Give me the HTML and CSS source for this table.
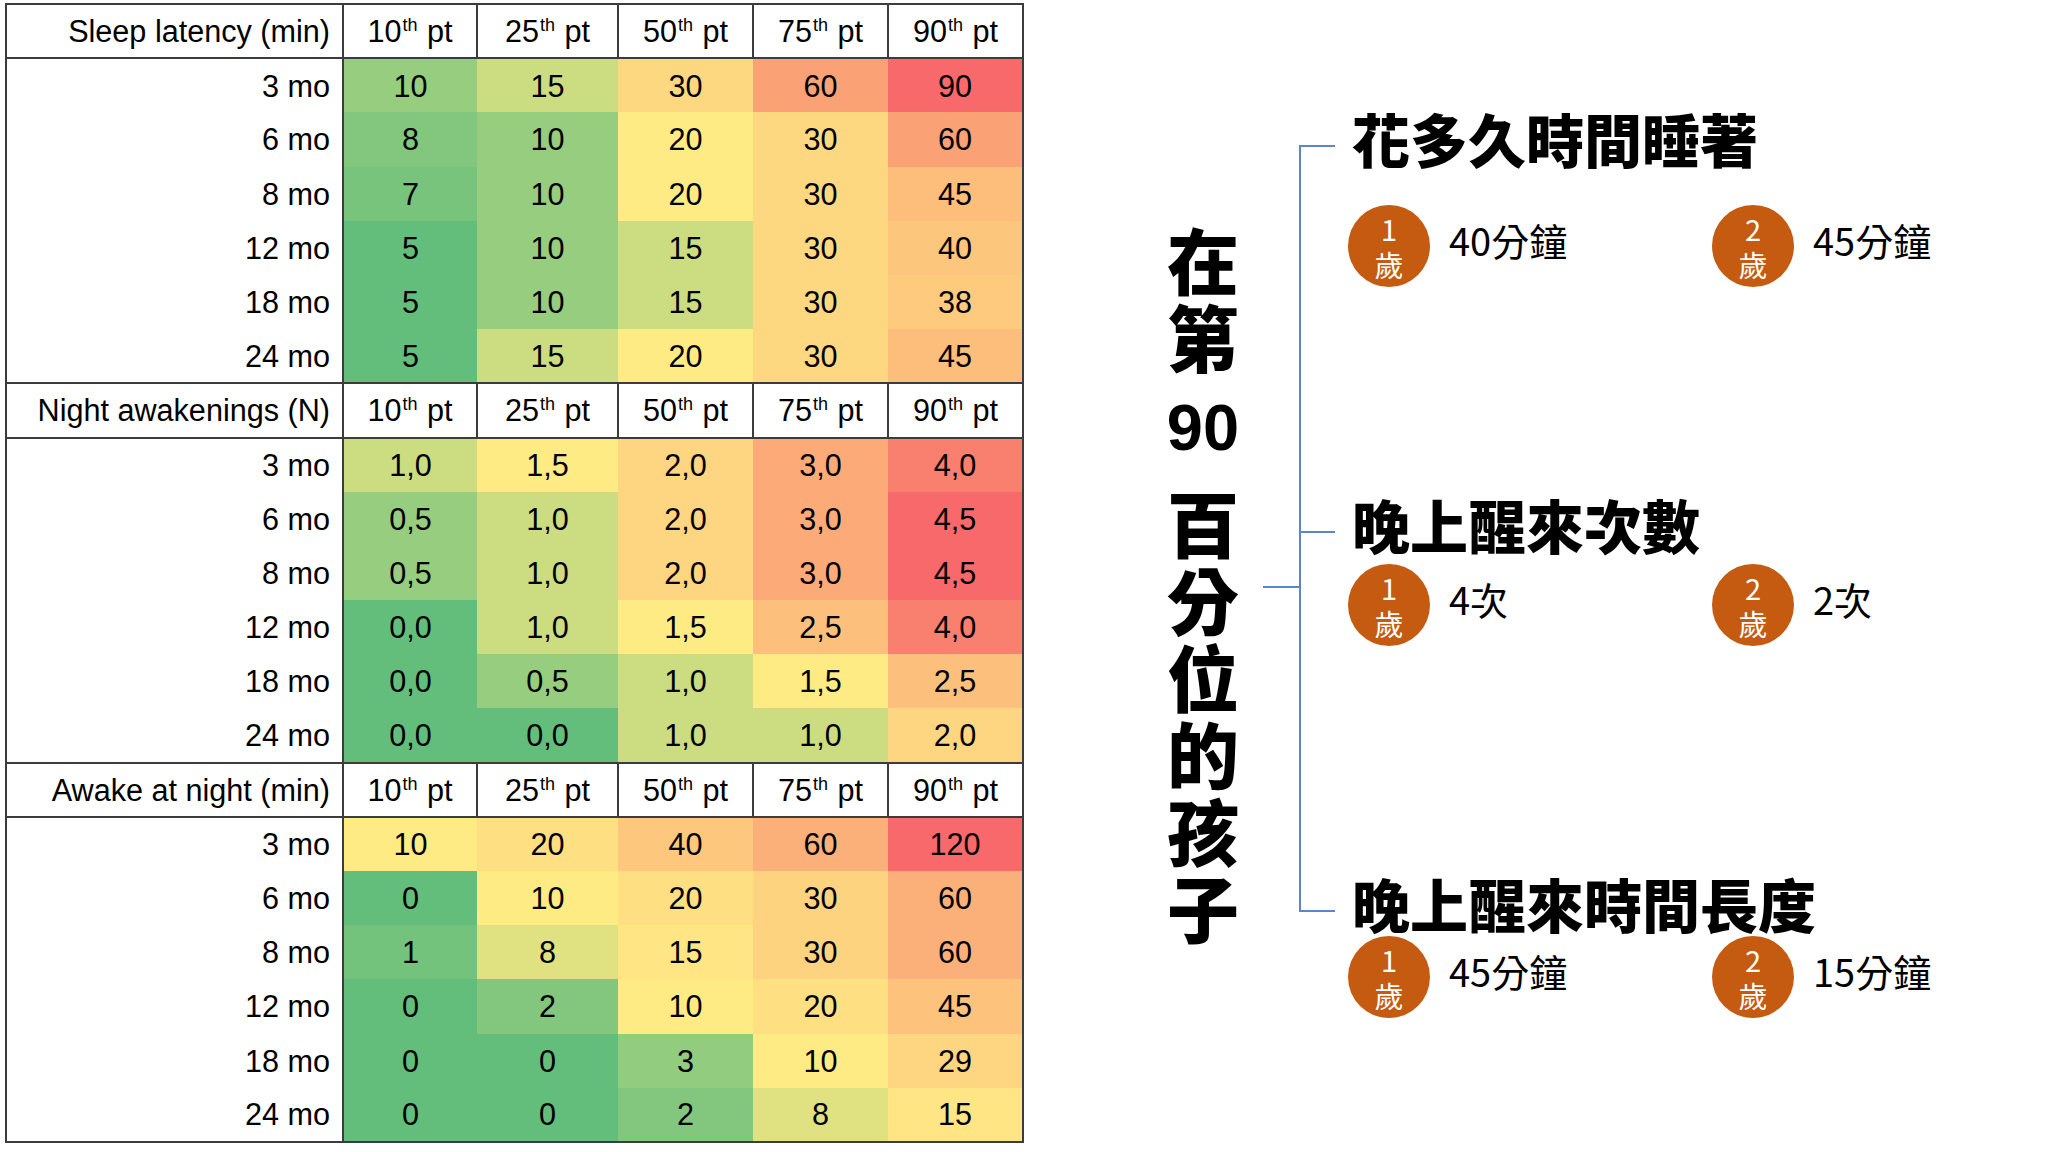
FILE: index.html
```html
<!DOCTYPE html>
<html lang="zh-Hant">
<head>
<meta charset="utf-8">
<title>90th percentile sleep</title>
<link rel="stylesheet" href="styles.css">
</head>
<body>
<main class="slide">
  <table class="pct">
    <colgroup>
      <col class="c-lbl"><col class="c-10"><col class="c-25"><col class="c-50"><col class="c-75"><col class="c-90">
    </colgroup>
    <tbody>
      <tr class="hdr"><th class="lbl">Sleep latency (min)</th><th>10<sup>th</sup> pt</th><th>25<sup>th</sup> pt</th><th>50<sup>th</sup> pt</th><th>75<sup>th</sup> pt</th><th>90<sup>th</sup> pt</th></tr>
      <tr><td class="lbl">3 mo</td><td class="v">10</td><td class="v">15</td><td class="v">30</td><td class="v">60</td><td class="v">90</td></tr>
      <tr><td class="lbl">6 mo</td><td class="v">8</td><td class="v">10</td><td class="v">20</td><td class="v">30</td><td class="v">60</td></tr>
      <tr><td class="lbl">8 mo</td><td class="v">7</td><td class="v">10</td><td class="v">20</td><td class="v">30</td><td class="v">45</td></tr>
      <tr><td class="lbl">12 mo</td><td class="v">5</td><td class="v">10</td><td class="v">15</td><td class="v">30</td><td class="v">40</td></tr>
      <tr><td class="lbl">18 mo</td><td class="v">5</td><td class="v">10</td><td class="v">15</td><td class="v">30</td><td class="v">38</td></tr>
      <tr><td class="lbl">24 mo</td><td class="v">5</td><td class="v">15</td><td class="v">20</td><td class="v">30</td><td class="v">45</td></tr>
    </tbody>
    <tbody>
      <tr class="hdr"><th class="lbl">Night awakenings (N)</th><th>10<sup>th</sup> pt</th><th>25<sup>th</sup> pt</th><th>50<sup>th</sup> pt</th><th>75<sup>th</sup> pt</th><th>90<sup>th</sup> pt</th></tr>
      <tr><td class="lbl">3 mo</td><td class="v">1,0</td><td class="v">1,5</td><td class="v">2,0</td><td class="v">3,0</td><td class="v">4,0</td></tr>
      <tr><td class="lbl">6 mo</td><td class="v">0,5</td><td class="v">1,0</td><td class="v">2,0</td><td class="v">3,0</td><td class="v">4,5</td></tr>
      <tr><td class="lbl">8 mo</td><td class="v">0,5</td><td class="v">1,0</td><td class="v">2,0</td><td class="v">3,0</td><td class="v">4,5</td></tr>
      <tr><td class="lbl">12 mo</td><td class="v">0,0</td><td class="v">1,0</td><td class="v">1,5</td><td class="v">2,5</td><td class="v">4,0</td></tr>
      <tr><td class="lbl">18 mo</td><td class="v">0,0</td><td class="v">0,5</td><td class="v">1,0</td><td class="v">1,5</td><td class="v">2,5</td></tr>
      <tr><td class="lbl">24 mo</td><td class="v">0,0</td><td class="v">0,0</td><td class="v">1,0</td><td class="v">1,0</td><td class="v">2,0</td></tr>
    </tbody>
    <tbody>
      <tr class="hdr"><th class="lbl">Awake at night (min)</th><th>10<sup>th</sup> pt</th><th>25<sup>th</sup> pt</th><th>50<sup>th</sup> pt</th><th>75<sup>th</sup> pt</th><th>90<sup>th</sup> pt</th></tr>
      <tr><td class="lbl">3 mo</td><td class="v">10</td><td class="v">20</td><td class="v">40</td><td class="v">60</td><td class="v">120</td></tr>
      <tr><td class="lbl">6 mo</td><td class="v">0</td><td class="v">10</td><td class="v">20</td><td class="v">30</td><td class="v">60</td></tr>
      <tr><td class="lbl">8 mo</td><td class="v">1</td><td class="v">8</td><td class="v">15</td><td class="v">30</td><td class="v">60</td></tr>
      <tr><td class="lbl">12 mo</td><td class="v">0</td><td class="v">2</td><td class="v">10</td><td class="v">20</td><td class="v">45</td></tr>
      <tr><td class="lbl">18 mo</td><td class="v">0</td><td class="v">0</td><td class="v">3</td><td class="v">10</td><td class="v">29</td></tr>
      <tr class="last"><td class="lbl">24 mo</td><td class="v">0</td><td class="v">0</td><td class="v">2</td><td class="v">8</td><td class="v">15</td></tr>
    </tbody>
  </table>

  <section class="summary">
    <p class="title">在第 <span class="num">90</span> 百分位的孩子</p>
    <div class="connector"></div>
    <div class="brace">
      <div class="brace-upper"></div>
      <div class="brace-lower"></div>
    </div>
    <div class="items">
      <div class="item item-1">
        <h2>花多久時間睡著</h2>
        <div class="ages">
          <div class="age"><div class="badge"><span>1 歲</span></div><span class="val">40分鐘</span></div>
          <div class="age"><div class="badge"><span>2 歲</span></div><span class="val">45分鐘</span></div>
        </div>
      </div>
      <div class="item item-2">
        <h2>晚上醒來次數</h2>
        <div class="ages">
          <div class="age"><div class="badge"><span>1 歲</span></div><span class="val">4次</span></div>
          <div class="age"><div class="badge"><span>2 歲</span></div><span class="val">2次</span></div>
        </div>
      </div>
      <div class="item item-3">
        <h2>晚上醒來時間長度</h2>
        <div class="ages">
          <div class="age"><div class="badge"><span>1 歲</span></div><span class="val">45分鐘</span></div>
          <div class="age"><div class="badge"><span>2 歲</span></div><span class="val">15分鐘</span></div>
        </div>
      </div>
    </div>
  </section>
</main>
<script src="script.js"></script>
</body>
</html>
```

FILE: styles.css
```css
* {
  box-sizing: border-box;
  margin: 0;
  padding: 0;
}

html, body {
  width: 2048px;
  height: 1152px;
  background: #ffffff;
  overflow: hidden;
}

body {
  font-family: "Liberation Sans", Arial, sans-serif;
  color: #000000;
}

.slide {
  display: flex;
  align-items: flex-start;
  padding: 3px 0 0 5px;
}

/* ---------- percentile table ---------- */
.pct {
  border-collapse: collapse;
  table-layout: fixed;
  width: 1017px;
  font-size: 30.6px;
  flex: none;
}

.c-lbl { width: 337px; }
.c-10 { width: 134px; }
.c-25 { width: 141px; }
.c-50 { width: 135px; }
.c-75 { width: 135px; }
.c-90 { width: 135px; }

.pct th,
.pct td {
  height: 54.2px;
  padding: 0;
  text-align: center;
  vertical-align: middle;
  font-weight: 400;
  white-space: nowrap;
  line-height: 34px;
}

.pct .lbl {
  text-align: right;
  padding-right: 12px;
  border-left: 2px solid #3c3c3c;
  border-right: 2px solid #3c3c3c;
  background: #ffffff;
}

.pct tr.hdr th {
  border: 2px solid #3c3c3c;
  background: #ffffff;
}

.pct td:last-child {
  border-right: 2px solid #3c3c3c;
}

.pct tr.last td {
  border-bottom: 2px solid #3c3c3c;
}

.pct sup {
  font-size: 18px;
  line-height: 0;
  vertical-align: 11px;
  margin-left: 1px;
  margin-right: 1px;
}

/* ---------- summary on the right ---------- */
.summary {
  display: flex;
  align-items: flex-start;
  margin-left: 124px;
  font-family: "Noto Sans CJK TC", "Noto Sans", sans-serif;
}

.title {
  width: 110px;
  margin-top: 216px;
  text-align: center;
  font-size: 72px;
  line-height: 77px;
  font-weight: 900;
}

.title .num {
  font-family: "Liberation Sans", Arial, sans-serif;
  font-weight: 700;
  font-size: 65px;
  line-height: 109px;
}

.connector {
  width: 36px;
  height: 2px;
  margin-left: 5px;
  margin-top: 583px;
  background: #5b86c9;
}

.brace {
  width: 36px;
  margin-top: 142px;
  display: flex;
  flex-direction: column;
}

.brace-upper {
  height: 386px;
  border-top: 2px solid #5b86c9;
  border-left: 2px solid #5b86c9;
}

.brace-lower {
  height: 381px;
  border-top: 2px solid #5b86c9;
  border-left: 2px solid #5b86c9;
  border-bottom: 2px solid #5b86c9;
}

.items {
  margin-left: 13px;
  display: flex;
  flex-direction: column;
}

.item h2 {
  font-size: 58px;
  line-height: 60px;
  font-weight: 900;
  padding-left: 4px;
  white-space: nowrap;
}

.item-1 { margin-top: 105px; }
.item-1 .ages { margin-top: 37px; }

.item-2 { margin-top: 207px; }
.item-2 .ages { margin-top: 10px; }

.item-3 { margin-top: 227px; }
.item-3 .ages { margin-top: 3px; }

.ages {
  display: grid;
  grid-template-columns: 364px auto;
}

.age {
  display: flex;
  align-items: center;
}

.badge {
  width: 82px;
  height: 82px;
  border-radius: 50%;
  background: #c55a11;
  color: #ffffff;
  display: flex;
  align-items: center;
  justify-content: center;
  flex: none;
}

.badge span {
  width: 32px;
  text-align: center;
  font-size: 29px;
  line-height: 36px;
}

.val {
  margin-left: 19px;
  padding-bottom: 13px;
  font-size: 38px;
  line-height: 48px;
  white-space: nowrap;
}
```

FILE: script.js
```js
(function () {
  var GREEN = [99, 190, 123];
  var YELLOW = [255, 235, 132];
  var RED = [248, 105, 107];

  function parse(s) {
    return parseFloat(s.trim().replace(',', '.'));
  }

  function mix(a, b, t) {
    return a.map(function (x, k) {
      return Math.round(x + (b[k] - x) * t);
    });
  }

  document.querySelectorAll('table.pct tbody').forEach(function (tb) {
    var cells = Array.prototype.slice.call(tb.querySelectorAll('td.v'));
    var vals = cells.map(function (c) { return parse(c.textContent); });
    var sorted = vals.slice().sort(function (a, b) { return a - b; });
    var n = sorted.length;
    var pos = (n - 1) * 0.5;
    var lo = Math.floor(pos), hi = Math.ceil(pos);
    var mid = sorted[lo] + (sorted[hi] - sorted[lo]) * (pos - lo);
    var min = sorted[0], max = sorted[n - 1];

    cells.forEach(function (c, i) {
      var v = vals[i], col;
      if (v <= mid) {
        col = mix(GREEN, YELLOW, mid > min ? (v - min) / (mid - min) : 1);
      } else {
        col = mix(YELLOW, RED, max > mid ? (v - mid) / (max - mid) : 1);
      }
      c.style.backgroundColor = 'rgb(' + col.join(',') + ')';
    });
  });
})();
```
